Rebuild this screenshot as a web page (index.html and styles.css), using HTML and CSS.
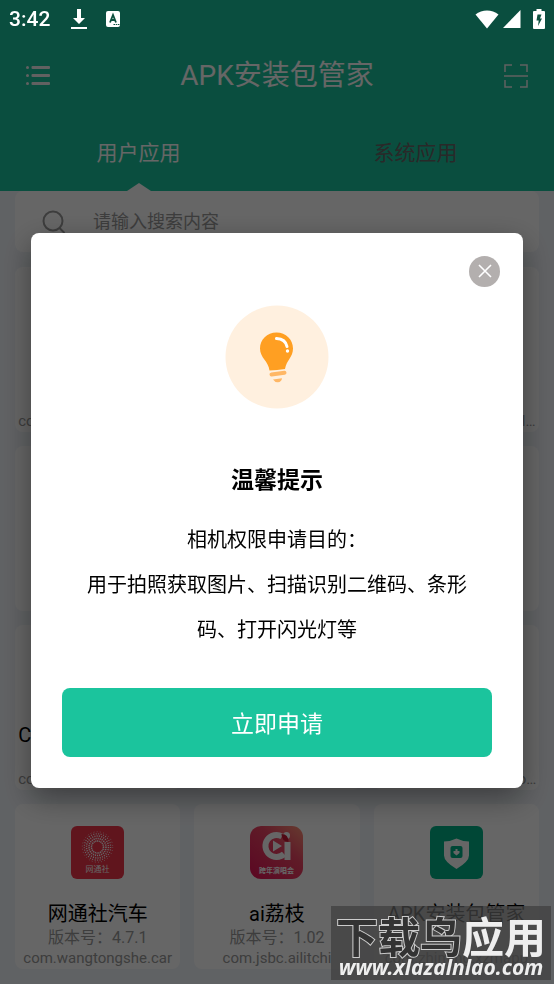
FILE: index.html
```html
<!DOCTYPE html>
<html lang="zh-CN">
<head>
<meta charset="utf-8">
<meta name="viewport" content="width=device-width, initial-scale=1">
<title>APK安装包管家</title>
<link rel="stylesheet" href="styles.css">
</head>
<body>
<header class="top">
  <div class="status">
    <span class="clock">3:42</span>
    <svg class="st-download" viewBox="0 0 16 22" width="16" height="22"><path fill="#fff" d="M6 1h4v9h4l-6 6-6-6h4zM0 19h16v2H0z"/></svg>
    <svg class="st-input" viewBox="0 0 16 18" width="16" height="18"><rect x="1" y="1" width="14" height="16" rx="2" fill="#fff"/><path d="M5 12.500 8 5l3 7.500M6 10h4" fill="none" stroke="#0b503e" stroke-width="1.800"/><path d="M8.500 14.500h1.500m.700 0h1.500m.700 0h1.500" stroke="#0b503e" stroke-width="1.200"/></svg>
    <span class="spacer"></span>
    <svg viewBox="0 0 24 20" width="24" height="20"><path fill="#fff" d="M.5 5.500C7 .2 17 .2 23.500 5.500L12 19.500z"/></svg>
    <svg class="st-signal" viewBox="0 0 18 18" width="18" height="18"><path fill="#fff" d="M0 18 17.500 0v18z"/></svg>
    <svg class="st-battery" viewBox="0 0 12 20" width="12" height="20"><path fill="#fff" d="M3.500 0h5v2H11q1 0 1 1v16q0 1-1 1H1q-1 0-1-1V3q0-1 1-1h2.500z"/><path fill="#0b503e" d="M4.500 5.500h4L7 9.500h2L5 17l.700-5.500H3.500z"/></svg>
  </div>
  <div class="bar">
    <button class="icon-btn" aria-label="菜单"><svg viewBox="0 0 24 20" width="24" height="20" fill="#f2f2f2"><rect x="0" y="0" width="3" height="3" rx="1.500"/><rect x="0" y="8" width="3" height="3" rx="1.500"/><rect x="0" y="16" width="3" height="3" rx="1.500"/><rect x="5.500" y="0" width="18.500" height="3" rx="1"/><rect x="5.500" y="8" width="18.500" height="3" rx="1"/><rect x="5.500" y="16" width="18.500" height="3" rx="1"/></svg></button>
    <h1>APK安装包管家</h1>
    <button class="icon-btn" aria-label="扫一扫"><svg viewBox="0 0 24 24" width="24" height="24" fill="none" stroke="#f2f2f2" stroke-width="1.500"><path d="M1 8V1h7M16 1h7v7M1 16v7h7M16 23h7v-7M0 12h24"/></svg></button>
  </div>
  <nav class="tabs">
    <button class="tab active">用户应用</button>
    <button class="tab">系统应用</button>
  </nav>
</header>
<main>
  <label class="search">
    <svg viewBox="0 0 24 24" width="24" height="24" fill="none" stroke="#999" stroke-width="2"><circle cx="11" cy="11" r="9.500"/><path d="m17.500 18 5 5"/></svg>
    <input type="search" placeholder="请输入搜索内容" aria-label="请输入搜索内容">
  </label>
  <div class="grid">
    <article class="card"><span class="pic"></span><h2></h2><p></p><p>com.google.android.gm</p></article>
    <article class="card"></article>
    <article class="card"><span class="pic"></span><h2></h2><p></p><p>com.google.android.vl…</p></article>
    <article class="card"></article>
    <article class="card"></article>
    <article class="card"></article>
    <article class="card"><span class="pic"></span><h2>Chrome Browsers</h2><p></p><p>com.google.android.gm</p></article>
    <article class="card"></article>
    <article class="card"><span class="pic"></span><h2></h2><p></p><p>com.zhiliaoapp.hvideo…</p></article>
    <article class="card">
      <svg class="pic" viewBox="0 0 53 53"><rect width="53" height="53" rx="6" fill="#f0354a"/><g fill="none" stroke="#fff"><circle cx="26.500" cy="21" r="6" stroke-width="1.500" stroke-dasharray="1.200 .6"/><circle cx="26.500" cy="21" r="8.500" stroke-width="1.600" stroke-dasharray="1.200 .9"/><circle cx="26.500" cy="21" r="11" stroke-width="1.500" stroke-dasharray="1.100 1.200"/><circle cx="26.500" cy="21" r="13.200" stroke-width="1.200" stroke-dasharray="1 1.500"/><circle cx="26.500" cy="21" r="15.200" stroke-width=".8" stroke-dasharray=".8 2.400"/></g><text x="26.500" y="46" text-anchor="middle" font-size="8" fill="#fff">网通社</text></svg>
      <h2>网通社汽车</h2><p>版本号：4.7.1</p><p>com.wangtongshe.car</p>
    </article>
    <article class="card">
      <svg class="pic" viewBox="0 0 53 53"><defs><linearGradient id="pink" x1="1" y1="0" x2="0.100" y2="1"><stop offset="0" stop-color="#ff9478"/><stop offset=".4" stop-color="#ee4664"/><stop offset="1" stop-color="#e41658"/></linearGradient></defs><rect width="53" height="53" rx="11" fill="url(#pink)"/><path d="M32 10.500A11 11 0 1 0 34 28" fill="none" stroke="#fff" stroke-width="6"/><path d="M34.500 16h6v18h-6zM23 14.500l9 5.500-9 5.500z" fill="#fff"/><circle cx="36.500" cy="9.500" r="3.500" fill="#fff"/><path d="M31.500 8q7 0 7 8-7-1-7-8z" fill="#c81532"/><text x="26.500" y="47" text-anchor="middle" font-size="7" font-weight="700" fill="#fff">跨年演唱会</text></svg>
      <h2>ai荔枝</h2><p>版本号：1.02</p><p>com.jsbc.ailitchi</p>
    </article>
    <article class="card">
      <svg class="pic" viewBox="0 0 53 53"><rect width="53" height="53" rx="6" fill="#02b287"/><path d="M26.500 12.500q6 3 12.500 3v14q0 6-12.500 13.500Q14 35.500 14 29.500v-14q6.500 0 12.500-3z" fill="#fff"/><rect x="20.500" y="20" width="12" height="12" rx="2" fill="#02b287"/><path d="M25.500 23h2v2h2v2l-3 2.500-3-2.500v-2h2z" fill="#fff"/></svg>
      <h2>APK安装包管家</h2><p></p><p>com.zhiming.xzmapp</p>
    </article>
  </div>
</main>
<div class="overlay">
  <section class="dialog" role="dialog" aria-modal="true" aria-labelledby="tip-title">
    <button class="close" aria-label="关闭"><svg viewBox="0 0 14 14" width="14" height="14" stroke="#fff" stroke-width="1.600"><path d="m1 1 12 12M13 1 1 13"/></svg></button>
    <svg class="bulb" viewBox="0 0 104 104" width="104" height="104"><circle cx="52" cy="52" r="51.500" fill="#fff0df"/><path d="M51.500 27.500C61 27.500 68 34.500 68 43.500c0 9-6.500 11.500-8 20.500q-8 1-15.500 1.500C43.500 56 35 53 35 43.500c0-9 7-16 16.500-16z" fill="#ff9f22"/><path d="M51.500 33.500q9 .5 10.500 8" fill="none" stroke="#fff" stroke-width="3" stroke-linecap="round"/><circle cx="62.500" cy="46" r="1.700" fill="#fff"/><path d="m46.500 69.500 13-1.700" stroke="#ffb765" stroke-width="4" stroke-linecap="round"/><path d="m48 74.500 9-1.200q-.5 3.700-4 4-3 .2-5-2.800z" fill="#ffb765"/></svg>
    <h2 id="tip-title">温馨提示</h2>
    <p>相机权限申请目的：<br>用于拍照获取图片、扫描识别二维码、条形码、打开闪光灯等</p>
    <button class="apply">立即申请</button>
  </section>
</div>
<aside class="mark"><div class="mark-name"><span>下载鸟</span>应用</div><div class="mark-url">www.xlazalnlao.com</div></aside>
</body>
</html>
```
FILE: styles.css
```css
* { box-sizing: border-box; }
body {
  margin: 0;
  background: #f1f5fa;
  color: #000;
  font-family: Roboto, "Noto Sans CJK SC", sans-serif;
}
h1, h2, p { margin: 0; font-weight: 400; }
button { border: 0; padding: 0; background: none; font: inherit; color: inherit; }
svg { display: block; flex: none; }

.top { background: #1bc49d; color: #fff; }
.status {
  position: relative;
  z-index: 20;
  display: flex;
  align-items: center;
  height: 38px;
  padding: 0 9px;
}
.clock { font-size: 21px; font-weight: 500; line-height: 38px; }
.st-download { margin-left: 21px; }
.st-input { margin-left: 18px; }
.spacer { flex: 1; }
.st-signal { margin-left: 4px; }
.st-battery { margin: 0 0 0 12px; }

.bar {
  display: flex;
  align-items: center;
  justify-content: space-between;
  height: 76px;
  padding: 0 26px;
}
.bar h1 { font-size: 28px; line-height: 40px; }

.tabs { display: grid; grid-template-columns: 1fr 1fr; height: 77px; }
.tab { position: relative; padding-bottom: 3px; font-size: 21px; color: #666; }
.tab.active { color: #fff; }
.tab.active::after {
  content: "";
  position: absolute;
  left: calc(50% - 12px);
  bottom: 0;
  border: 12px solid transparent;
  border-top: 0;
  border-bottom: 8px solid #fff;
}

main { padding: 0 15px 15px; }
.search {
  display: flex;
  align-items: center;
  gap: 27px;
  height: 61px;
  padding: 0 27px;
  border-radius: 8px;
  background: #fff;
}
.search input {
  flex: 1;
  min-width: 0;
  padding: 0;
  border: 0;
  outline: 0;
  background: none;
  font: 18px/28px Roboto, "Noto Sans CJK SC", sans-serif;
}
.search input::placeholder { color: #999; opacity: 1; }

.grid {
  display: grid;
  grid-template-columns: repeat(3, minmax(0, 1fr));
  grid-auto-rows: 165px;
  gap: 14px;
  margin-top: 15px;
}
.card {
  display: flex;
  flex-direction: column;
  align-items: center;
  padding: 22px 0 0;
  border-radius: 8px;
  background: #fff;
}
.pic { width: 53px; height: 53px; margin-bottom: 22px; font-family: "Noto Sans CJK SC", sans-serif; }
.card h2, .card p { white-space: nowrap; }
.card h2 { height: 26px; font-size: 20px; line-height: 26px; }
.card p { height: 21px; font-size: 16px; line-height: 21px; color: #999; }
.card p:last-child { font-size: 15px; }

.overlay {
  position: fixed;
  inset: 0;
  z-index: 10;
  display: flex;
  align-items: center;
  padding: 36px 31px 0;
  background: rgba(0, 0, 0, .6);
}
.dialog {
  position: relative;
  flex: 1;
  display: flex;
  flex-direction: column;
  align-items: center;
  padding: 72px 31px 31px;
  border-radius: 8px;
  background: #fff;
  box-shadow: 0 10px 30px rgba(0, 0, 0, .4);
  text-align: center;
}
.close {
  position: absolute;
  top: 23px;
  right: 23px;
  display: grid;
  place-items: center;
  width: 31px;
  height: 31px;
  border-radius: 50%;
  background: #b3afae;
}
.dialog h2 { margin-top: 56px; font-size: 23px; font-weight: 700; line-height: 32px; }
.dialog p { margin: 21px 20px 35px; font-size: 20px; line-height: 45px; }
.apply {
  align-self: stretch;
  height: 69px;
  border-radius: 8px;
  background: #1bc49d;
  color: #fff;
  font-size: 23px;
}

.mark {
  position: fixed;
  right: 3px;
  bottom: 4px;
  z-index: 30;
  width: 220px;
  height: 74px;
  padding-top: 7px;
  background: rgba(64, 64, 64, .75);
  color: #eee;
  text-align: center;
  white-space: nowrap;
  font-family: "Noto Sans CJK SC", sans-serif;
}
.mark-name { font-size: 42px; font-weight: 700; line-height: 44px; }
.mark-name span { color: #333; -webkit-text-stroke: 2px #ccc; paint-order: stroke fill; }
.mark-url { font: italic 700 21px/20px "Noto Sans", sans-serif; }
```
